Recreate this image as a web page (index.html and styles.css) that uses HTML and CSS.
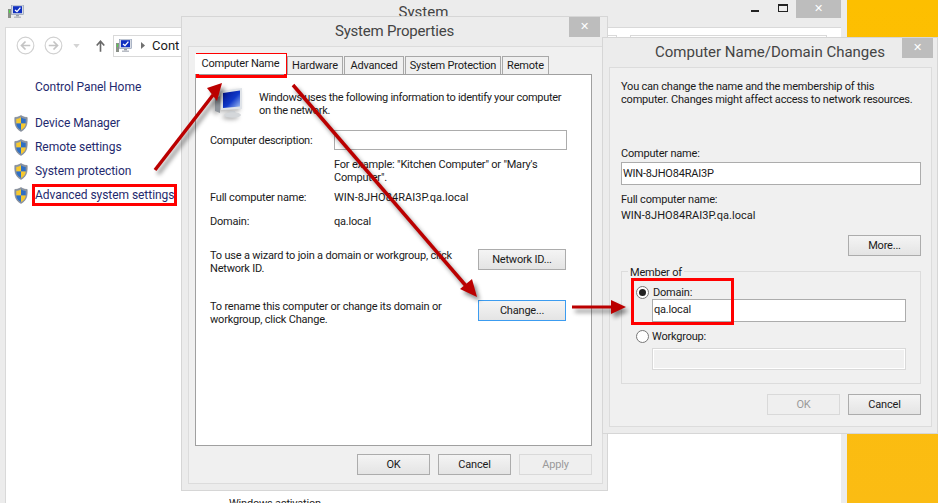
FILE: index.html
```html
<!DOCTYPE html>
<html lang="en">
<head>
<meta charset="utf-8">
<title>System Properties</title>
<link rel="stylesheet" href="styles.css">
</head>
<body>
<svg class="defs" width="0" height="0" aria-hidden="true">
  <defs>
    <linearGradient id="scr" x1="0" y1="0" x2="1" y2="1"><stop offset="0" stop-color="#00108c"/><stop offset=".55" stop-color="#1038c8"/><stop offset="1" stop-color="#a8c4f4"/></linearGradient>
    <symbol id="pc" viewBox="0 0 16 14">
      <rect x="0" y="4" width="3" height="9" fill="#8a9088"/><rect x="1" y="5" width="1" height="3" fill="#52d848"/>
      <rect x="3.5" y="0" width="12" height="9.5" fill="#d8dce4" stroke="#8090a8" stroke-width=".6"/><rect x="5" y="1.2" width="9" height="7" fill="#1030c0"/>
      <path d="M7 5l2 1.6L12.4 2.6" fill="none" stroke="#fff" stroke-width="1.3"/>
      <rect x="8" y="10" width="3" height="1.5" fill="#9aa0a8"/><rect x="6" y="11.5" width="7" height="1.5" fill="#b8bcc4"/>
    </symbol>
    <symbol id="shield" viewBox="0 0 14 17">
      <path d="M7 .5C5 1.8 3 2.4.8 2.5c-.3 6 .4 11 6.2 14 5.800-3 6.500-8 6.200-14C11 2.400 9 1.800 7 .5z" fill="#8c96a4" stroke="#6c7480" stroke-width=".5"/>
      <path d="M7 2.200C5.500 3.200 4 3.700 2.300 3.900V8.500H7z" fill="#f7c92e"/>
      <path d="M7 2.200c1.500 1 3 1.500 4.700 1.700V8.500H7z" fill="#2f6fc4"/>
      <path d="M2.300 8.500c.2 2.800 1.600 4.800 4.700 6.500V8.500z" fill="#2f6fc4"/>
      <path d="M11.700 8.500c-.2 2.800-1.600 4.800-4.700 6.500V8.500z" fill="#f7c92e"/>
    </symbol>
  </defs>
</svg>

<main class="desktop">
  <section class="window back">
    <header class="back-title">
      <svg class="title-icon"><use href="#pc"/></svg>
      <span class="back-caption">System</span>
      <div class="controls">
        <span class="minimize"></span>
        <span class="maximize"></span>
        <span class="close close-wide">✕</span>
      </div>
    </header>
    <div class="back-body">
      <div class="toolbar">
        <svg class="nav" viewBox="0 0 20 20"><circle cx="10" cy="10" r="8.800" fill="none" stroke="#d0d0d0" stroke-width="1.200"/><path d="M15 10H6M10 5.800 5.800 10l4.200 4.200" fill="none" stroke="#c4c4c4" stroke-width="1.800"/></svg>
        <svg class="nav" viewBox="0 0 20 20"><circle cx="10" cy="10" r="8.800" fill="none" stroke="#d0d0d0" stroke-width="1.200"/><path d="M5 10h9M10 5.800l4.200 4.200-4.200 4.200" fill="none" stroke="#c4c4c4" stroke-width="1.800"/></svg>
        <svg class="drop" viewBox="0 0 8 5"><path d="M0 0h8L4 5z" fill="#d4d4d4"/></svg>
        <svg class="up" viewBox="0 0 10 13"><path d="M5 13V2M.8 6 5 1.200 9.200 6" fill="none" stroke="#686868" stroke-width="1.800"/></svg>
        <div class="address">
          <svg class="addr-icon"><use href="#pc"/></svg>
          <svg class="chev" viewBox="0 0 4 7"><path d="M0 0l4 3.500L0 7z" fill="#707070"/></svg>
          <span>Cont</span>
        </div>
        <div class="search"></div>
      </div>
      <nav class="sidebar">
        <a class="home">Control Panel Home</a>
        <ul class="tasks">
          <li><svg class="shield"><use href="#shield"/></svg><a>Device Manager</a></li>
          <li><svg class="shield"><use href="#shield"/></svg><a>Remote settings</a></li>
          <li><svg class="shield"><use href="#shield"/></svg><a>System protection</a></li>
          <li><svg class="shield"><use href="#shield"/></svg><a>Advanced system settings</a></li>
        </ul>
      </nav>
      <div class="activation">Windows activation</div>
    </div>
  </section>

  <section class="window dialog sysprops">
    <header class="dlg-title"><span>System Properties</span><span class="close close-dlg">✕</span></header>
    <div class="panel panel-tabs">
      <div class="tabs">
        <span class="tab active">Computer Name</span>
        <span class="tab t-hw">Hardware</span>
        <span class="tab t-adv">Advanced</span>
        <span class="tab t-sp">System Protection</span>
        <span class="tab t-rem">Remote</span>
      </div>
      <div class="page">
        <div class="intro">
          <svg class="big-pc" viewBox="0 0 30 30">
            <path d="M2 11l5-3v17l-5-2z" fill="#8f959c"/>
            <path d="M8 3l21-3v21L8 22z" fill="#dfe3e8"/>
            <path d="M10 5l17-2.500v16L10 20z" fill="url(#scr)"/>
            <path d="M17 23h5l1 3h-7z" fill="#c8ccd0"/>
            <ellipse cx="19.500" cy="27" rx="8.500" ry="2.800" fill="#d4d7da"/>
          </svg>
          <p>Windows uses the following information to identify your computer<br>on the network.</p>
        </div>
        <div class="row desc-row"><span class="lbl">Computer description:</span><div class="input desc-input"></div></div>
        <p class="example">For example: "Kitchen Computer" or "Mary's<br>Computer".</p>
        <div class="row full-row"><span class="lbl">Full computer name:</span><span class="machine">WIN-8JHO84RAI3P.qa.local</span></div>
        <div class="row domain-row"><span class="lbl">Domain:</span><span>qa.local</span></div>
        <div class="action netid"><p>To use a wizard to join a domain or workgroup, click<br>Network ID.</p><button class="btn wide">Network ID...</button></div>
        <div class="action rename"><p>To rename this computer or change its domain or<br>workgroup, click Change.</p><button class="btn wide focus">Change...</button></div>
      </div>
      <footer class="dlg-foot foot-sys">
        <button class="btn">OK</button>
        <button class="btn">Cancel</button>
        <button class="btn off">Apply</button>
      </footer>
    </div>
  </section>

  <section class="window dialog changes">
    <header class="dlg-title"><span>Computer Name/Domain Changes</span><span class="close close-dlg">✕</span></header>
    <div class="panel panel-form">
      <p class="form-intro">You can change the name and the membership of this<br>computer. Changes might affect access to network resources.</p>
      <div class="f-label">Computer name:</div>
      <div class="input name-input">WIN-8JHO84RAI3P</div>
      <div class="f-full">Full computer name:</div>
      <div class="f-value machine">WIN-8JHO84RAI3P.qa.local</div>
      <div class="more-row"><button class="btn">More...</button></div>
      <div class="group">
        <span class="legend">Member of</span>
        <label class="radio-row"><span class="radio on"></span>Domain:</label>
        <div class="input dom-input">qa.local</div>
        <label class="radio-row wg"><span class="radio"></span>Workgroup:</label>
        <div class="input wg-input"></div>
      </div>
      <footer class="dlg-foot foot-form">
        <button class="btn off">OK</button>
        <button class="btn">Cancel</button>
      </footer>
    </div>
  </section>

  <svg class="arrows" viewBox="0 0 938 503">
    <g class="arrow-set" fill="#bb0000" stroke="#bb0000">
      <path d="M155 170 213 95" fill="none" stroke-width="3.500"/><path d="M222 83 207 88 217 101z" stroke="none"/>
      <path d="M293 85 467 287" fill="none" stroke-width="3.500"/><path d="M477 297 460 289 472 279z" stroke="none"/>
      <path d="M572 307H612" fill="none" stroke-width="3"/><path d="M626 307 611 300V314z" stroke="none"/>
    </g>
  </svg>
  <div class="mark mark-link"></div>
  <div class="mark mark-tab"></div>
  <div class="mark mark-domain"></div>
</main>
</body>
</html>
```
FILE: styles.css
```css
* { box-sizing: border-box; }
html, body { margin: 0; padding: 0; }
body { width: 938px; height: 503px; overflow: hidden; font: 11px/13px Roboto, "Liberation Sans", sans-serif; letter-spacing: -.2px; color: #1a1a1a; }
p { margin: 0; }
.defs { position: absolute; }
.desktop { position: relative; width: 938px; height: 503px; overflow: hidden; background: linear-gradient(#fdbf00, #fbbc13); }
.window { position: absolute; }

/* background window */
.back { left: 0; top: 0; width: 847px; height: 503px; background: #ececec; display: flex; flex-direction: column; }
.back-title { height: 27px; display: grid; grid-template-columns: 1fr auto 1fr; position: relative; flex: none; }
.title-icon { width: 16px; height: 14px; margin: 5px 0 0 8px; }
.back-caption { font-size: 15px; line-height: 24px; letter-spacing: 0; color: #444; }
.controls { display: flex; justify-content: flex-end; align-items: flex-start; margin-right: 6px; }
.minimize { width: 8px; height: 2px; margin: 10px 19px 0 0; background: #222; }
.maximize { width: 10px; height: 8px; margin: 4px 8px 0 0; border: 1px solid #222; border-top-width: 2px; }
.close { background: #bdbdbd; color: #fff; font: 11px/18px "DejaVu Sans", sans-serif; letter-spacing: 0; text-align: center; }
.close-wide { width: 45px; height: 18px; }
.back-body { flex: 1; position: relative; margin: 0 6px 0 5px; background: #fff; border-top: 1px solid #d9d9d9; border-left: 1px solid #d9d9d9; }
.toolbar { display: flex; align-items: center; height: 21px; margin-top: 7px; padding-left: 10px; }
.nav { width: 19px; height: 19px; margin-right: 9px; }
.drop { width: 7px; height: 4px; margin: 0 16px 0 1px; }
.up { width: 9px; height: 12px; margin-right: 8px; }
.address { width: 504px; height: 22px; border: 1px solid #d9d9d9; display: flex; align-items: center; padding-left: 2px; font-size: 13px; letter-spacing: 0; }
.addr-icon { width: 16px; height: 14px; margin-right: 9px; }
.chev { width: 4px; height: 7px; margin-right: 7px; }
.search { width: 197px; height: 22px; margin-left: 13px; border: 1px solid #d9d9d9; }
.sidebar { padding: 23px 0 0 29px; font-size: 12px; letter-spacing: -.05px; color: #1f2a6e; }
.home { display: block; line-height: 16px; }
.tasks { list-style: none; margin: 16px 0 0 -21px; padding: 0; }
.tasks li { display: flex; align-items: center; height: 24px; }
.shield { width: 14px; height: 17px; margin-right: 7px; }
.activation { position: absolute; left: 223px; top: 469px; color: #222; }

/* dialogs */
.dialog { background: #ececec; border: 1px solid #d6d6d6; }
.dlg-title { height: 29px; position: relative; text-align: center; font-size: 15px; line-height: 29px; letter-spacing: 0; color: #444; }
.close-dlg { position: absolute; top: 0; width: 31px; height: 20px; line-height: 20px; }
.panel { background: #f0f0f0; border: 1px solid #dcdcdc; }
.sysprops { left: 181px; top: 16px; width: 427px; height: 475px; }
.sysprops .dlg-title { letter-spacing: -.2px; }
.sysprops .close-dlg { left: 387px; width: 31px; }
.panel-tabs { margin: 0 4px 0 6px; height: 438px; padding: 9px 0 0 6px; }
.tabs { display: flex; height: 18px; }
.tab { height: 18px; line-height: 18px; background: #f0f0f0; border: 1px solid #a8a8a8; border-bottom: 0; margin-right: 1px; text-align: center; white-space: nowrap; }
.tab.active { width: 91px; height: 20px; margin-top: -2px; background: #fff; position: relative; z-index: 1; line-height: 20px; border: 0; }
.t-hw { width: 56px; }
.t-adv { width: 60px; }
.t-sp { width: 96px; }
.t-rem { width: 47px; }
.page { width: 397px; height: 372px; background: #fff; border: 1px solid #a0a0a0; padding: 16px 0 0 14px; }
.intro { display: flex; }
.big-pc { width: 30px; height: 30px; margin: -3px 16px -1px 3px; flex: none; filter: drop-shadow(-2px 2px 2px rgba(0, 0, 0, .3)); }
.intro p { white-space: nowrap; letter-spacing: -.3px; }
.row { display: flex; align-items: center; }
.lbl { width: 124px; flex: none; }
.machine { letter-spacing: .05px; }
.desc-row { margin-top: 13px; }
.desc-row .lbl { letter-spacing: -.3px; }
.input { background: #fff; border: 1px solid #acacac; }
.desc-input { width: 233px; height: 20px; }
.example { margin: 8px 0 0 124px; }
.full-row { margin-top: 7px; }
.domain-row { margin-top: 11px; }
.action { display: flex; align-items: flex-start; }
.action p { width: 268px; white-space: nowrap; }
.netid { margin-top: 21px; }
.rename { margin-top: 25px; }
.btn { width: 73px; height: 21px; padding: 0; font: 11px/13px Roboto, "Liberation Sans", sans-serif; letter-spacing: -.2px; color: #1a1a1a; background: linear-gradient(#f4f4f4, #e4e4e4); border: 1px solid #acacac; border-radius: 0; }
.btn.wide { width: 88px; }
.btn.focus { border-color: #3c9cf0; }
.btn.off { color: #9a9a9a; background: #efefef; border-color: #d9d9d9; }
.dlg-foot { display: flex; justify-content: flex-end; gap: 8px; }
.foot-sys { width: 397px; margin-top: 8px; }

.changes { left: 602px; top: 37px; width: 336px; height: 397px; }
.changes .close-dlg { left: 299px; }
.panel-form { margin: 0 5px 0 6px; height: 360px; padding: 12px 0 0 11px; }
.form-intro { white-space: nowrap; }
.f-label { margin-top: 41px; }
.name-input { width: 300px; height: 23px; margin-top: 2px; padding-left: 1px; line-height: 21px; }
.f-full { margin-top: 8px; }
.f-value { margin-top: 3px; }
.more-row { display: flex; justify-content: flex-end; width: 300px; margin-top: 13px; }
.group { position: relative; width: 300px; height: 113px; margin-top: 15px; border: 1px solid #dcdcdc; padding: 14px 0 0 14px; }
.legend { position: absolute; left: 6px; top: -6px; padding: 0 2px; background: #f0f0f0; }
.radio-row { display: flex; align-items: center; height: 13px; }
.radio { width: 13px; height: 13px; border: 1px solid #777; border-radius: 50%; background: #fff; margin-right: 4px; flex: none; display: flex; align-items: center; justify-content: center; }
.radio.on::after { content: ""; width: 7px; height: 7px; border-radius: 50%; background: #222; }
.dom-input { width: 254px; height: 23px; margin: 0 0 0 16px; padding-left: 1px; line-height: 20px; }
.wg { margin-top: 8px; }
.wg .radio { margin-right: 3px; }
.wg-input { width: 254px; height: 22px; margin: 5px 0 0 16px; background: #f0f0f0; border: 1px solid #d9d9d9; box-shadow: inset 0 0 0 1px #fff; }
.foot-form { width: 300px; margin-top: 10px; }

/* annotations */
.arrows { position: absolute; left: 0; top: 0; width: 938px; height: 503px; pointer-events: none; }
.arrow-set { filter: drop-shadow(3px 4px 2px rgba(0, 0, 0, .45)); }
.mark { position: absolute; border: 3px solid #f00; }
.mark-link { left: 32px; top: 184px; width: 145px; height: 22px; }
.mark-tab { left: 196px; top: 53px; width: 91px; height: 25px; }
.mark-domain { left: 631px; top: 278px; width: 103px; height: 47px; }
```
